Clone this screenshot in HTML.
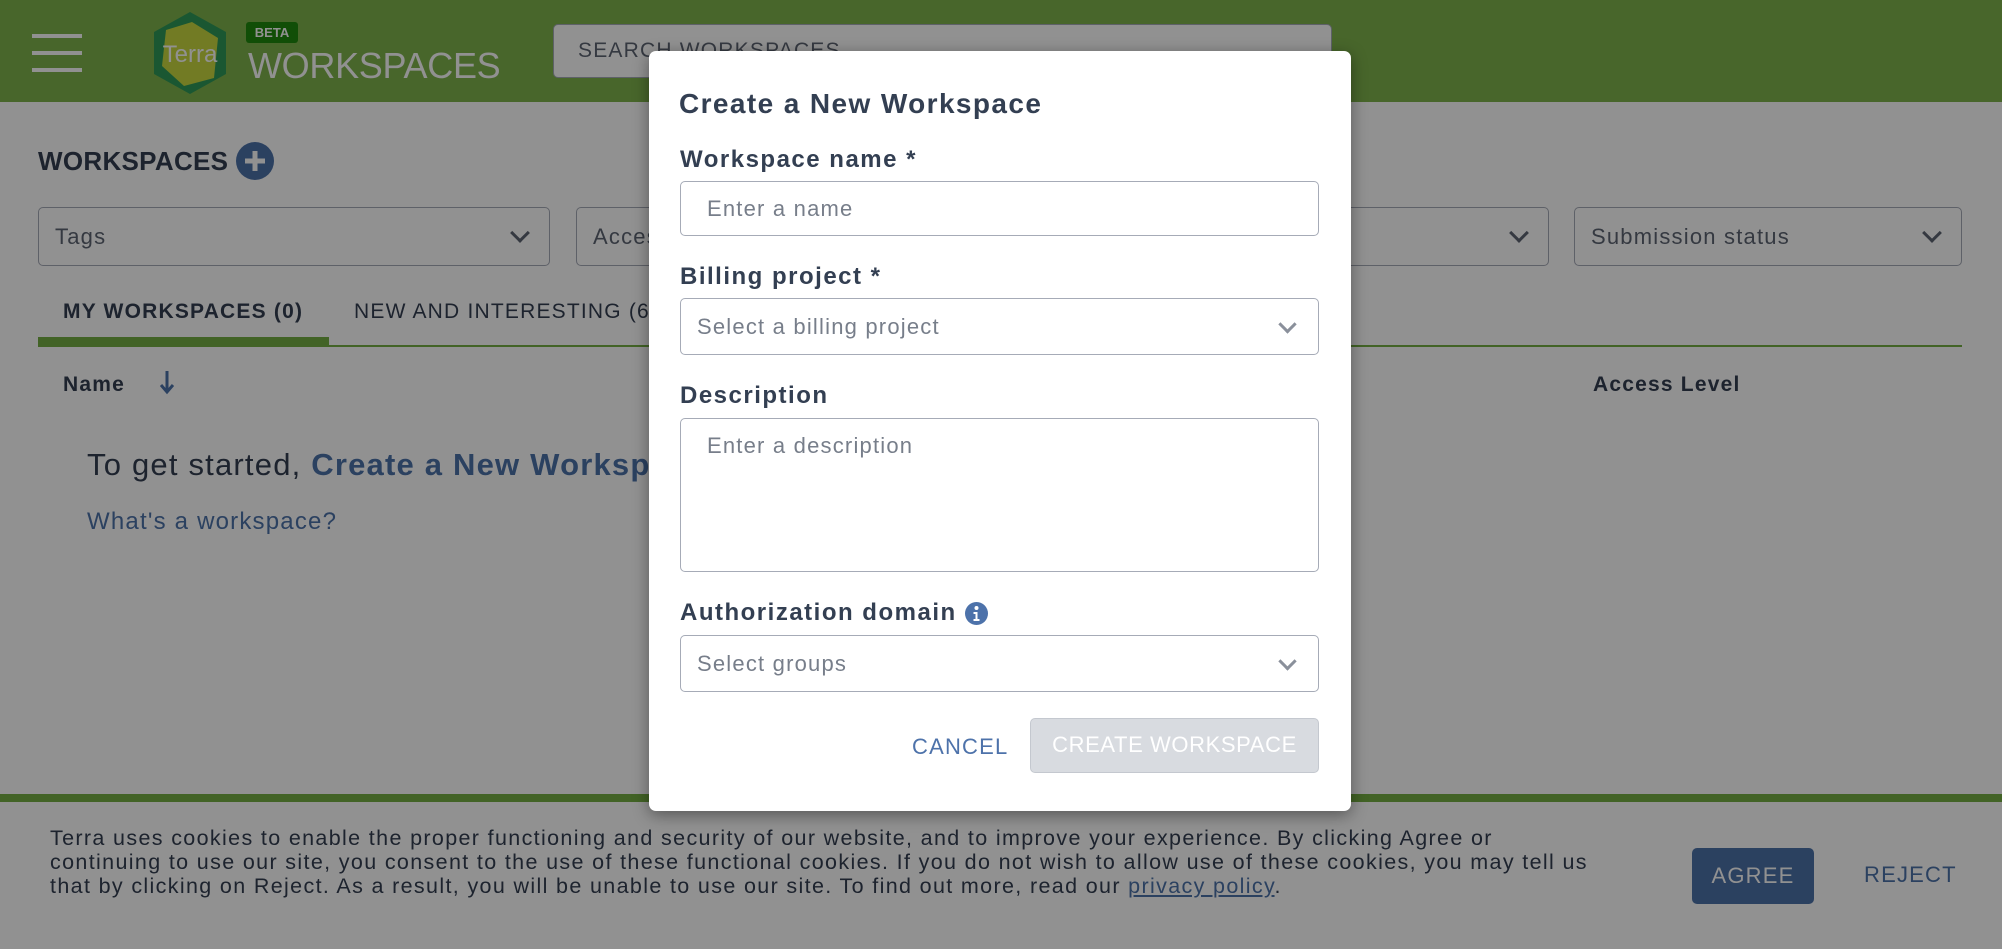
<!DOCTYPE html>
<html><head><meta charset="utf-8"><style>
*{box-sizing:border-box;margin:0;padding:0}
body{width:2002px;height:949px;overflow:hidden;position:relative;background:#fff;font-family:"Liberation Sans",sans-serif;color:#333f52;letter-spacing:1.2px}
.abs{position:absolute}
.hdr{left:0;top:0;width:2002px;height:102px;background:#7fb44c}
.sel{border:1.5px solid #a6abb7;border-radius:5px;background:#fff;height:59px;top:207px;font-size:22px;color:#5d6573;padding:0 16px;display:flex;align-items:center;justify-content:space-between}
.chev{width:14px;height:14px;border-right:3px solid #5d6573;border-bottom:3px solid #5d6573;transform:rotate(45deg);margin-top:-8px;margin-right:6px}
.ov{left:0;top:0;width:2002px;height:949px;background:rgba(0,0,0,0.43)}
.modal{left:649px;top:51px;width:702px;height:760px;background:#fff;border-radius:7px;box-shadow:0 4px 16px rgba(0,0,0,.4)}
.lbl{font-size:24px;font-weight:bold;color:#333f52;left:31px;letter-spacing:1.5px;display:flex;align-items:center}
.inp{left:31px;width:639px;border:1.5px solid #a6abb7;border-radius:5px;background:#fff;font-size:22px;color:#777e8a;padding:0 26px;display:flex;align-items:center}
.mchev{position:absolute;right:24px;top:50%;width:13px;height:13px;border-right:3px solid #8a909b;border-bottom:3px solid #8a909b;transform:translateY(-70%) rotate(45deg)}
</style></head><body>
<div class="abs hdr"></div>
<div class="abs" style="left:32px;top:34px;width:50px;height:4px;background:#fff"></div>
<div class="abs" style="left:32px;top:51px;width:50px;height:4px;background:#fff"></div>
<div class="abs" style="left:32px;top:68px;width:50px;height:4px;background:#fff"></div>
<svg class="abs" style="left:148px;top:8px" width="84" height="90" viewBox="0 0 84 90"><polygon points="42,4 78,24 78,66 42,86 6,66 6,24" fill="#2e9a58"/><polygon points="44,14 70,30 66,70 36,78 14,58 18,22" fill="#c8d940"/><text x="42" y="54" font-size="24" fill="#fff" text-anchor="middle" letter-spacing="0" font-family="Liberation Sans Narrow,Liberation Sans,sans-serif">Terra</text></svg>
<div class="abs" style="left:246px;top:22px;width:52px;height:21px;background:#1f8a0d;border-radius:3px;color:#fff;font-size:13px;font-weight:bold;text-align:center;line-height:21px;letter-spacing:0">BETA</div>
<div class="abs" style="left:248px;top:45px;font-size:36px;color:#fff;letter-spacing:-0.3px">WORKSPACES</div>
<div class="abs" style="left:553px;top:24px;width:779px;height:54px;background:#fff;border:1.5px solid #a6abb7;border-radius:5px;font-size:21px;color:#5d6573;padding:14px 24px">SEARCH WORKSPACES</div>

<div class="abs" style="left:38px;top:146px;font-size:26px;font-weight:bold;letter-spacing:0.3px">WORKSPACES</div>
<svg class="abs" style="left:236px;top:142px" width="38" height="38"><circle cx="19" cy="19" r="19" fill="#4d72aa"/><rect x="9" y="16.5" width="20" height="5" fill="#fff"/><rect x="16.5" y="9" width="5" height="20" fill="#fff"/></svg>
<div class="abs sel" style="left:38px;width:512px">Tags<div class="chev"></div></div>
<div class="abs sel" style="left:576px;width:480px">Access levels<div class="chev"></div></div>
<div class="abs sel" style="left:1080px;width:469px">Projects<div class="chev"></div></div>
<div class="abs sel" style="left:1574px;width:388px">Submission status<div class="chev"></div></div>
<div class="abs" style="left:63px;top:300px;font-size:21px;font-weight:bold">MY WORKSPACES (0)</div>
<div class="abs" style="left:354px;top:300px;font-size:21px">NEW AND INTERESTING (6)</div>
<div class="abs" style="left:38px;top:345px;width:1924px;height:2px;background:#74ae43"></div>
<div class="abs" style="left:38px;top:337px;width:291px;height:9px;background:#74ae43"></div>
<div class="abs" style="left:63px;top:373px;font-size:21px;font-weight:bold">Name</div>
<svg class="abs" style="left:160px;top:370px" width="14" height="26"><path d="M7 1v20M1 15l6 7 6-7" stroke="#4d72aa" stroke-width="3" fill="none"/></svg>
<div class="abs" style="left:1593px;top:373px;font-size:21px;font-weight:bold">Access Level</div>
<div class="abs" style="left:87px;top:447px;font-size:31px">To get started, <b style="color:#4d72aa">Create a New Workspace</b></div>
<div class="abs" style="left:87px;top:508px;font-size:24px;color:#4d72aa">What's a workspace?</div>

<div class="abs" style="left:0;top:794px;width:2002px;height:8px;background:#74ae43"></div>
<div class="abs" style="left:50px;top:826px;font-size:21.5px;line-height:24px;color:#333f52;white-space:nowrap;letter-spacing:1.35px">Terra uses cookies to enable the proper functioning and security of our website, and to improve your experience. By clicking Agree or<br>continuing to use our site, you consent to the use of these functional cookies. If you do not wish to allow use of these cookies, you may tell us<br>that by clicking on Reject. As a result, you will be unable to use our site. To find out more, read our <span style="color:#4d72aa;text-decoration:underline">privacy policy</span>.</div>
<div class="abs" style="left:1692px;top:848px;width:122px;height:56px;background:#4d72aa;border-radius:5px;color:#fff;font-size:22px;text-align:center;line-height:56px">AGREE</div>
<div class="abs" style="left:1864px;top:862px;font-size:22px;color:#4d72aa">REJECT</div>

<div class="abs ov"></div>

<div class="abs modal">
<div class="abs" style="left:30px;top:37px;font-size:28px;font-weight:bold;color:#333f52;letter-spacing:1.4px">Create a New Workspace</div>
<div class="abs lbl" style="top:95px">Workspace name *</div>
<div class="abs inp" style="top:130px;height:55px">Enter a name</div>
<div class="abs lbl" style="top:212px">Billing project *</div>
<div class="abs inp" style="top:247px;height:57px;padding-left:16px">Select a billing project<div class="mchev"></div></div>
<div class="abs lbl" style="top:331px">Description</div>
<div class="abs inp" style="top:367px;height:154px;align-items:flex-start;padding-top:14px">Enter a description</div>
<div class="abs lbl" style="top:548px">Authorization domain<svg style="margin-left:8px" width="23" height="23"><circle cx="11.5" cy="11.5" r="11.5" fill="#4d72aa"/><circle cx="11.5" cy="6" r="2" fill="#fff"/><path d="M8.5 10h4v7h2v2h-6v-2h2v-5h-2z" fill="#fff"/></svg></div>
<div class="abs inp" style="top:584px;height:57px;padding-left:16px">Select groups<div class="mchev"></div></div>
<div class="abs" style="left:263px;top:683px;font-size:22px;color:#4d72aa">CANCEL</div>
<div class="abs" style="left:381px;top:667px;width:289px;height:55px;background:#d8dbe0;border:1.5px solid #c4c8cf;border-radius:5px;color:#fff;font-size:22px;text-align:center;line-height:52px;letter-spacing:0.6px">CREATE WORKSPACE</div>
</div>
</body></html>
